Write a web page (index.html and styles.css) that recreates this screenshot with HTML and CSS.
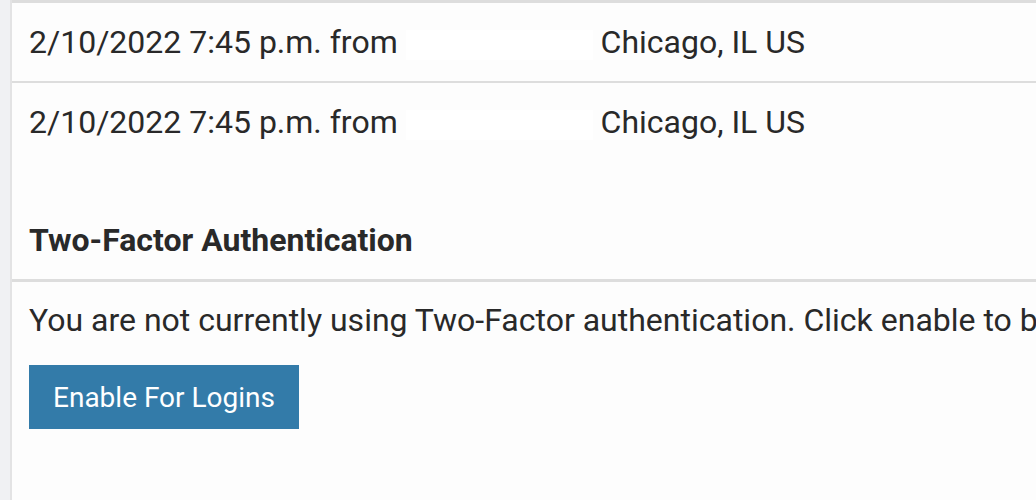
FILE: index.html
```html
<!DOCTYPE html>
<html lang="en">
<head>
  <meta charset="UTF-8">
  <title>Account Security</title>
  <meta name="viewport" content="width=device-width, initial-scale=1">
  <link rel="stylesheet" href="styles.css">
</head>
<body>
  <div class="page">
    <div class="gutter"></div>
    <div class="main">
      <div class="history">
        <div class="login-row">2/10/2022 7:45 p.m. from <span class="ip"></span> Chicago, IL US</div>
        <div class="login-row">2/10/2022 7:45 p.m. from <span class="ip"></span> Chicago, IL US</div>
      </div>

      <div class="panel">
        <h3 class="panel-heading">Two-Factor Authentication</h3>
        <div class="panel-body">
          <p>You are not currently using Two-Factor authentication. Click enable to begin setting it up for your account.</p>
          <button class="btn-primary">Enable For Logins</button>
        </div>
      </div>
    </div>
  </div>
</body>
</html>
```

FILE: styles.css
```css
html, body { margin: 0; height: 100%; overflow: hidden; }
body { font-family: Roboto, "Liberation Sans", sans-serif; color: #292929; background: #fdfdfd; }

.page { display: flex; height: 100%; }
.gutter { width: 10px; flex: none; background: #f0f1f3; border-right: 2px solid #e3e3e4; }
.main { flex: 1; min-width: 0; overflow: hidden; background: #fdfdfd; }

.history { border-top: 3px solid #dddddd; }
.login-row { font-size: 32px; line-height: 40px; padding: 19px 17px; white-space: nowrap; border-bottom: 2px solid #dddddd; }
.login-row:last-child { border-bottom: none; }
.ip { display: inline-block; width: 187px; height: 30px; vertical-align: middle; background: #ffffff; }

.panel { margin-top: 40px; }
.panel-heading { margin: 0; font-size: 32px; line-height: 40px; font-weight: 700; padding: 19px 17px; border-bottom: 3px solid #dddddd; white-space: nowrap; }
.panel-body { padding: 18px 17px; }
.panel-body p { margin: 0 0 25px; font-size: 32px; line-height: 40px; white-space: nowrap; }

.btn-primary { font-family: inherit; font-size: 28px; color: #fff; background: #337ba9; border: none; border-radius: 0; height: 64px; padding: 0 24px; }
```
